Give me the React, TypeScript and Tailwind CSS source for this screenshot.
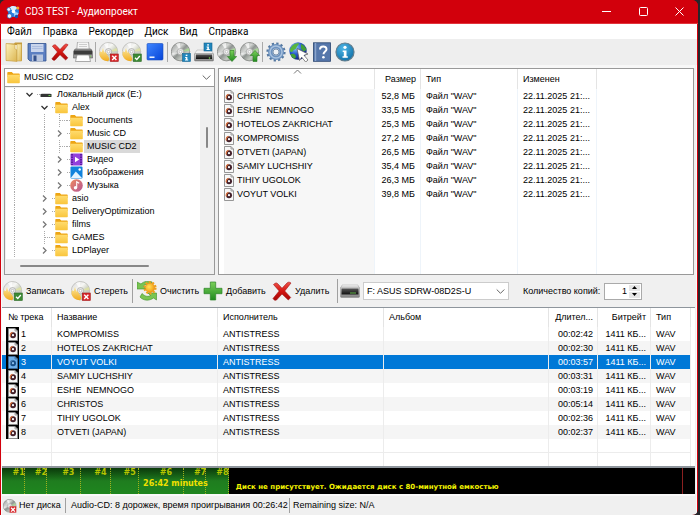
import { useState, type ReactNode } from "react";

/* ---------- data ---------- */

type FileRow = { name: string; size: string };
const files: FileRow[] = [
  { name: "CHRISTOS", size: "52,8 МБ" },
  { name: "ESHE  NEMNOGO", size: "33,5 МБ" },
  { name: "HOTELOS ZAKRICHAT", size: "25,3 МБ" },
  { name: "KOMPROMISS", size: "27,2 МБ" },
  { name: "OTVETI (JAPAN)", size: "26,5 МБ" },
  { name: "SAMIY LUCHSHIY", size: "35,4 МБ" },
  { name: "TIHIY UGOLOK", size: "26,3 МБ" },
  { name: "VOYUT VOLKI", size: "39,8 МБ" },
];

type Track = { name: string; time: string; seconds: number };
const tracks: Track[] = [
  { name: "KOMPROMISS", time: "00:02:42", seconds: 162 },
  { name: "HOTELOS ZAKRICHAT", time: "00:02:30", seconds: 150 },
  { name: "VOYUT VOLKI", time: "00:03:57", seconds: 237 },
  { name: "SAMIY LUCHSHIY", time: "00:03:31", seconds: 211 },
  { name: "ESHE  NEMNOGO", time: "00:03:19", seconds: 199 },
  { name: "CHRISTOS", time: "00:05:14", seconds: 314 },
  { name: "TIHIY UGOLOK", time: "00:02:36", seconds: 156 },
  { name: "OTVETI (JAPAN)", time: "00:02:37", seconds: 157 },
];

const PREGAP_SECONDS = 2;
const DISC_SECONDS = 4800;
const SCALE_SECONDS = 4895;

type NodeKind = "drive" | "folder" | "video" | "images" | "music";
type TreeNode = { label: string; depth: number; kind: NodeKind; state: "open" | "closed" | "leaf"; selected?: boolean };
const tree: TreeNode[] = [
  { label: "Локальный диск (E:)", depth: 0, kind: "drive", state: "open" },
  { label: "Alex", depth: 1, kind: "folder", state: "open" },
  { label: "Documents", depth: 2, kind: "folder", state: "leaf" },
  { label: "Music CD", depth: 2, kind: "folder", state: "closed" },
  { label: "MUSIC CD2", depth: 2, kind: "folder", state: "leaf", selected: true },
  { label: "Видео", depth: 2, kind: "video", state: "closed" },
  { label: "Изображения", depth: 2, kind: "images", state: "closed" },
  { label: "Музыка", depth: 2, kind: "music", state: "closed" },
  { label: "asio", depth: 1, kind: "folder", state: "closed" },
  { label: "DeliveryOptimization", depth: 1, kind: "folder", state: "closed" },
  { label: "films", depth: 1, kind: "folder", state: "closed" },
  { label: "GAMES", depth: 1, kind: "folder", state: "leaf" },
  { label: "LDPlayer", depth: 1, kind: "folder", state: "closed" },
];

/* ---------- icons ---------- */

function Gradients() {
  return (
    <svg className="absolute h-0 w-0" aria-hidden="true">
      <defs>
        <linearGradient id="discSilver" x1="0" y1="0" x2="1" y2="1">
          <stop offset="0" stopColor="#8f9291" />
          <stop offset=".35" stopColor="#d4d6d4" />
          <stop offset=".5" stopColor="#8f9491" />
          <stop offset=".7" stopColor="#c4c9c2" />
          <stop offset="1" stopColor="#777b79" />
        </linearGradient>
        <linearGradient id="discLight" x1="0" y1="0" x2="1" y2="1">
          <stop offset="0" stopColor="#d5d5d5" />
          <stop offset=".4" stopColor="#f7f7f5" />
          <stop offset=".6" stopColor="#cfd3c4" />
          <stop offset="1" stopColor="#b7b9b4" />
        </linearGradient>
        <linearGradient id="flame" x1="0" y1="0" x2="0" y2="1">
          <stop offset="0" stopColor="#fbe9a0" />
          <stop offset="1" stopColor="#f2ab1c" />
        </linearGradient>
        <linearGradient id="folderTall" x1="0" y1="0" x2="1" y2="1">
          <stop offset="0" stopColor="#fdf3bd" />
          <stop offset="1" stopColor="#dcb550" />
        </linearGradient>
        <linearGradient id="folderFront" x1="0" y1="0" x2="0" y2="1">
          <stop offset="0" stopColor="#ffdc6f" />
          <stop offset="1" stopColor="#f9c53c" />
        </linearGradient>
        <linearGradient id="redX" x1="0" y1="0" x2="0" y2="1">
          <stop offset="0" stopColor="#f0544c" />
          <stop offset=".5" stopColor="#d3140f" />
          <stop offset="1" stopColor="#a50808" />
        </linearGradient>
        <linearGradient id="greenUp" x1="0" y1="0" x2="0" y2="1">
          <stop offset="0" stopColor="#7bd05a" />
          <stop offset="1" stopColor="#1f8a1f" />
        </linearGradient>
        <linearGradient id="blueTile" x1="0" y1="0" x2="1" y2="1">
          <stop offset="0" stopColor="#3f86ff" />
          <stop offset="1" stopColor="#0644d8" />
        </linearGradient>
        <linearGradient id="greyBox" x1="0" y1="0" x2="0" y2="1">
          <stop offset="0" stopColor="#dcdcdc" />
          <stop offset="1" stopColor="#7e7e7e" />
        </linearGradient>
        <linearGradient id="darkBox" x1="0" y1="0" x2="0" y2="1">
          <stop offset="0" stopColor="#555" />
          <stop offset="1" stopColor="#111" />
        </linearGradient>
        <radialGradient id="infoBlue" cx=".4" cy=".3" r=".8">
          <stop offset="0" stopColor="#4fb6e6" />
          <stop offset="1" stopColor="#0a6aa3" />
        </radialGradient>
        <radialGradient id="globe" cx=".35" cy=".3" r=".8">
          <stop offset="0" stopColor="#8fd0ff" />
          <stop offset=".5" stopColor="#2456c8" />
          <stop offset="1" stopColor="#101a6a" />
        </radialGradient>
        <radialGradient id="sun" cx=".4" cy=".4" r=".6">
          <stop offset="0" stopColor="#ffe25a" />
          <stop offset="1" stopColor="#f29a12" />
        </radialGradient>
        <linearGradient id="music" x1="0" y1="0" x2="1" y2="1">
          <stop offset="0" stopColor="#ee8a5c" />
          <stop offset="1" stopColor="#b65696" />
        </linearGradient>
      </defs>
    </svg>
  );
}

function Svg({ children, className = "h-5 w-5", box = "0 0 20 20" }: { children: ReactNode; className?: string; box?: string }) {
  return (
    <svg viewBox={box} className={`${className} block shrink-0`} aria-hidden="true">
      {children}
    </svg>
  );
}

function DiscShape({ light = false }: { light?: boolean }) {
  return (
    <>
      <circle cx="9.5" cy="9.7" r="9.2" fill={light ? "url(#discLight)" : "url(#discSilver)"} stroke={light ? "#b5b5b0" : "#757875"} strokeWidth=".7" />
      <path d="M9.5 9.7 L5 2 A9 9 0 0 1 9 .9Z" fill="#fff" opacity=".7" />
      <path d="M9.5 9.7 L17.6 6 A9 9 0 0 1 18.5 9Z" fill={light ? "#e2e59a" : "#a5e08e"} opacity=".7" />
      <path d="M9.5 9.7 L1.6 14 A9 9 0 0 1 .7 11Z" fill="#fff" opacity=".5" />
      <circle cx="9.5" cy="9.7" r="3.2" fill="#e8e8e8" stroke="#999" strokeWidth=".6" />
      <circle cx="9.5" cy="9.7" r="1.3" fill="#fff" stroke="#888" strokeWidth=".4" />
    </>
  );
}

function BurnIcon({ badge }: { badge: "check" | "cross" }) {
  return (
    <Svg>
      <DiscShape light />
      <path d="M1 9c1 1 1.500 1.500 2 .5.4-1 .2-2.500 1.200-3.500 0 2.500 1.300 3 1.500 5 .3-.5.400-.9.3-1.500C7.500 11 8 13 9 14l1.500 3-1.500 2.300C4 19 .8 16 .4 12z" fill="url(#flame)" />
      {badge === "check" ? (
        <>
          <rect x="11.300" y="12" width="8" height="7.500" fill="#3c8a34" stroke="#2b6a26" strokeWidth=".6" />
          <path d="M13 15.700l1.800 1.800 3-3.500" fill="none" stroke="#fff" strokeWidth="1.300" />
        </>
      ) : (
        <>
          <rect x="11.300" y="12" width="8" height="7.500" fill="#d8282c" stroke="#a5181a" strokeWidth=".6" />
          <path d="M13.200 13.700l4.200 4.200m0-4.200l-4.200 4.200" stroke="#fff" strokeWidth="1.400" />
        </>
      )}
    </Svg>
  );
}

function InfoBadge({ x, y }: { x: number; y: number }) {
  return (
    <g>
      <rect x={x} y={y} width="8" height="8" fill="#2187bd" stroke="#14638f" strokeWidth=".6" />
      <rect x={x + 3.2} y={y + 1.2} width="1.700" height="1.400" fill="#fff" />
      <path d={`M${x + 2.6} ${y + 3.400}h2.300v2.700h.8v1h-3.200v-1h.8v-1.700h-.7z`} fill="#fff" />
    </g>
  );
}

const DiscInfoIcon = () => (
  <Svg>
    <DiscShape />
    <InfoBadge x={11.500} y={11.500} />
  </Svg>
);

const DriveInfoIcon = () => (
  <Svg>
    <path d="M3 8h14l3 4.500H0z" fill="#f2f2f2" stroke="#aaa" strokeWidth=".5" />
    <rect x=".4" y="11.500" width="19.200" height="7.500" rx="1" fill="url(#greyBox)" stroke="#777" strokeWidth=".5" />
    <rect x="2" y="12.500" width="16" height="4.500" fill="url(#darkBox)" />
    <circle cx="15.500" cy="16" r=".8" fill="#7fdc4f" />
    <InfoBadge x={10} y={1} />
  </Svg>
);

const DriveIcon = () => (
  <Svg>
    <path d="M2 4h16l1.500 4H.5z" fill="#f4f4f4" stroke="#aaa" strokeWidth=".5" />
    <rect x=".4" y="6" width="19.200" height="10.500" rx="1.200" fill="url(#greyBox)" stroke="#8a8a8a" strokeWidth=".5" />
    <rect x="1.500" y="7.500" width="17" height="6" fill="url(#darkBox)" />
    <path d="M10 12h6" stroke="#63b54a" strokeWidth="1" />
  </Svg>
);

function DiscArrowIcon({ up = false }: { up?: boolean }) {
  return (
    <Svg>
      <DiscShape />
      <path
        d={up ? "M15 8.500l4.700 5h-2.700v6h-4v-6h-2.700z" : "M13 8.500h4v6h2.700l-4.700 5-4.700-5h2.700z"}
        fill="url(#greenUp)"
        stroke="#2c7c22"
        strokeWidth=".6"
      />
    </Svg>
  );
}

const OpenIcon = () => (
  <Svg>
    <path d="M2 1.500h8l1-1h7v18H2z" fill="#c69c3c" />
    <path d="M3.500 3h12v15h-12z" fill="#fffbe6" />
    <path d="M2 1.500l9 1V7l2 1v11.500L2 18.500z" fill="url(#folderTall)" stroke="#c8a044" strokeWidth=".6" />
    <path d="M13 2h4.500v17H13z" fill="url(#folderTall)" stroke="#c8a044" strokeWidth=".6" />
  </Svg>
);

const SaveIcon = () => (
  <Svg>
    <path d="M1 1.500h18v17.500H3l-2-2z" fill="#5b7fc2" stroke="#36558f" strokeWidth=".8" />
    <rect x="4" y="2" width="12.500" height="8" fill="#c9d5ec" />
    <path d="M5 4.500h10.500M5 6.500h10.500" stroke="#9fb3da" strokeWidth=".7" />
    <rect x="5" y="12.500" width="11" height="6.500" fill="#b8c5de" />
    <rect x="6.500" y="13.500" width="3" height="5.500" fill="#34518c" />
  </Svg>
);

const CrossIcon = ({ className = "h-5 w-5" }: { className?: string }) => (
  <Svg className={className}>
    <path
      d="M1.500 3.500C3 2 4.500 1.500 5.500 2.500L10 7.300 15 2c1.500-1.300 2.500-1 4 0L12.700 10l6 6.500-2.400 2.500L10 13l-5.500 6c-1.300.7-2.700 0-3.500-1.500L7.200 10z"
      fill="url(#redX)"
      stroke="#a31111"
      strokeWidth=".6"
    />
  </Svg>
);

const PrintIcon = () => (
  <Svg>
    <path d="M4.500 0h11l.8 8H3.700z" fill="#f6f6f6" stroke="#8c8c8c" strokeWidth=".6" />
    <path d="M6 2.500h8M6 4.500h8" stroke="#bbb" strokeWidth=".7" />
    <path d="M2 7h16l1.700 3v6H.3v-6z" fill="#9a9a9a" stroke="#5f5f5f" strokeWidth=".6" />
    <rect x="1" y="8.500" width="18" height="4" fill="#3c3c3c" />
    <path d="M4 13h12l1.500 6.500h-15z" fill="#fdfdfd" stroke="#777" strokeWidth=".6" />
    <circle cx="17.500" cy="14.300" r=".7" fill="#7bd255" />
  </Svg>
);

const BlueDiscIcon = () => (
  <Svg>
    <rect x="2" y="1.500" width="16" height="16.500" rx="1" fill="url(#blueTile)" stroke="#1b4db8" strokeWidth=".6" />
    <rect x="4.500" y="14.500" width="5" height="1.400" fill="#fff" />
  </Svg>
);

const GearIcon = () => (
  <Svg>
    <circle cx="10" cy="10" r="8.300" fill="none" stroke="#54779f" strokeWidth="2.600" strokeDasharray="2.200 2.145" />
    <circle cx="10" cy="10" r="5.700" fill="none" stroke="#6d92bf" strokeWidth="4.600" />
    <circle cx="10" cy="10" r="6" fill="none" stroke="#a9c2df" strokeWidth="1.500" />
    <circle cx="10" cy="10" r="3" fill="#eef1f5" stroke="#4c6d94" strokeWidth=".7" />
  </Svg>
);

const GlobeIcon = () => (
  <Svg>
    <circle cx="9" cy="9" r="8.700" fill="url(#globe)" />
    <path d="M3 4c2-2 5-3.500 7-2.500-.5 2-2 2-2.500 4S4.500 7.500 3.500 9.500C2 11 .6 9 .8 7.500z" fill="#57b63f" />
    <path d="M12 2c3 1 5 3.500 5.500 6l-3 1.500-2.500-3zM3 12c2-.6 4 1 4 3l-1.500 2C3.500 16 2 14 1.500 12z" fill="#43a036" />
    <path d="M8 6.500l11 5.500-4 1.300 4 4.700-2.300 2-4-4.800-2.200 3.300z" fill="#fff" stroke="#555" strokeWidth=".7" />
  </Svg>
);

const HelpIcon = () => (
  <Svg>
    <rect x="1.500" y=".8" width="17" height="18.500" fill="#5677ab" stroke="#29446f" strokeWidth=".8" />
    <path d="M3.500 1v18" stroke="#8ba4cb" strokeWidth="1.400" />
    <path d="M8 7.500c0-4 6.500-4 6.500-.3 0 2.300-3 2.300-3 5" fill="none" stroke="#fff" strokeWidth="2" />
    <circle cx="11.400" cy="15.300" r="1.300" fill="#fff" />
  </Svg>
);

const InfoIcon = () => (
  <Svg>
    <circle cx="10" cy="10" r="9" fill="url(#infoBlue)" stroke="#5f7c8d" strokeWidth="1.200" />
    <circle cx="10" cy="5.300" r="1.600" fill="#fff" />
    <path d="M7.700 8.500h3.800v5.700h1.300v1.600H7.500v-1.600h1.300v-4.100H7.700z" fill="#fff" />
  </Svg>
);

const PlusIcon = () => (
  <Svg>
    <path d="M7.300 1h5.400v6.300H19v5.400h-6.300V19H7.300v-6.300H1V7.300h6.300z" fill="url(#greenUp)" stroke="#2c8428" strokeWidth=".7" />
  </Svg>
);

const RefreshIcon = () => (
  <Svg>
    <path d="M0 1l4 2C7 0 12-.5 15 1L13 4C10 3 8 3.500 6.500 5L9 8H0z" fill="#79c552" stroke="#3c8d2b" strokeWidth=".6" />
    <path d="M19.500 19l-3-2c-4 3-10 3-13.500-1l2-3.500c3 3 6 3.500 8.500 2L11 12h8.500z" fill="#79c552" stroke="#3c8d2b" strokeWidth=".6" />
    <circle cx="13" cy="6.800" r="5.600" fill="none" stroke="#f0a21a" strokeWidth="2" strokeDasharray="2 1.500" />
    <circle cx="13" cy="6.800" r="4.700" fill="url(#sun)" stroke="#e38b12" strokeWidth=".6" />
  </Svg>
);

const FolderIcon = () => (
  <Svg className="h-[13px] w-[13px]" box="0 0 13 13">
    <path d="M.3 2c0-.6.400-1 1-1h3.500l1.400 1.500h5.500c.6 0 1 .4 1 1V6H.3z" fill="#eda514" />
    <rect x=".2" y="3.700" width="12.600" height="8.500" rx=".8" fill="url(#folderFront)" />
  </Svg>
);

const nodeIcons: Record<NodeKind, () => ReactNode> = {
  folder: FolderIcon,
  drive: () => (
    <Svg className="h-[13px] w-[13px]" box="0 0 13 13">
      <path d="M2 5h8l1.500 1.500H.5z" fill="#d4d4d4" />
      <rect x=".5" y="6" width="11" height="3" rx=".5" fill="#333" />
      <rect x="8.500" y="7" width="2" height="1" fill="#63d44a" />
    </Svg>
  ),
  video: () => (
    <Svg className="h-[13px] w-[13px]" box="0 0 13 13">
      <rect x=".5" y=".5" width="12" height="12" rx="1" fill="#9340dc" />
      <path d="M2 1v11M11 1v11" stroke="#3f0f7a" strokeWidth="1.300" strokeDasharray="1.500 1" />
      <path d="M5 3.700v5.600l4.300-2.800z" fill="#fff" />
    </Svg>
  ),
  images: () => (
    <Svg className="h-[13px] w-[13px]" box="0 0 13 13">
      <rect x=".5" y=".5" width="12" height="12" rx="1" fill="#1283dc" />
      <path d="M.8 12l5-6.500L12 12z" fill="#e4f4ff" />
      <circle cx="9.700" cy="3.500" r="1.200" fill="#fff" />
    </Svg>
  ),
  music: () => (
    <Svg className="h-[13px] w-[13px]" box="0 0 13 13">
      <circle cx="6.500" cy="6.500" r="6.300" fill="url(#music)" />
      <circle cx="5.500" cy="8.700" r="1.700" fill="#fff" />
      <path d="M6.700 8.700V2.700l2.500 1.500" fill="none" stroke="#fff" strokeWidth="1.100" />
    </Svg>
  ),
};

function Chevron({ open = false }: { open?: boolean }) {
  return (
    <Svg className="h-[9px] w-[9px]" box="0 0 9 9">
      <path d={open ? "M1.500 3l3 3 3-3" : "M3 1.500l3 3-3 3"} fill="none" stroke={open ? "#333" : "#777"} strokeWidth="1.300" />
    </Svg>
  );
}

const SelectArrow = () => (
  <span className="pointer-events-none absolute right-[3px]">
    <Svg className="h-[9px] w-[9px]" box="0 0 9 9">
      <path d="M.7 2.500l3.800 3.800 3.800-3.800" fill="none" stroke="#666" strokeWidth="1" />
    </Svg>
  </span>
);

const WavIcon = ({ tinted = false }: { tinted?: boolean }) => (
  <Svg className="h-[13px] w-[10px]" box="0 0 10 13">
    <path d="M.5.5h6.500l2.500 2.500v9.500h-9z" fill={tinted ? "#6fb0ea" : "#f8f8f8"} stroke={tinted ? "#3b6c9c" : "#8b8b8b"} strokeWidth=".9" />
    <path d="M7 .5V3h2.500" fill="none" stroke={tinted ? "#3b6c9c" : "#8b8b8b"} strokeWidth=".8" />
    <circle cx="5" cy="7.200" r="3" fill={tinted ? "#174e86" : "#43202a"} />
    <path d="M2.500 8.500A3 3 0 0 1 4.500 4.300" fill="none" stroke={tinted ? "#4f7fae" : "#e0743c"} strokeWidth="1.200" />
    <circle cx="5" cy="7.200" r="1.100" fill={tinted ? "#8fc1ee" : "#fff"} />
  </Svg>
);

const AppIcon = () => (
  <Svg className="h-[14px] w-[14px]" box="0 0 14 14">
    <circle cx="7.500" cy="6.500" r="5.500" fill="#2b7fe0" />
    <path d="M3 3c2-3 7-2.500 8.500 0L7.500 6.500z" fill="#d7ecff" />
    <path d="M7.500 6.500l5 1.500c-.5 2-2 3.500-4 4z" fill="#9fd2ff" />
    <circle cx="7.500" cy="6.500" r="1.800" fill="#fff" />
    <circle cx="2.800" cy="4.500" r="1.900" fill="#e8f4ff" stroke="#145db5" strokeWidth=".7" />
    <circle cx="3.500" cy="11" r="2.300" fill="#e8f4ff" stroke="#145db5" strokeWidth=".7" />
    <circle cx="11.800" cy="3" r="1.500" fill="#f9a12a" />
    <circle cx="10.500" cy="11.500" r="1.700" fill="#1b50b0" />
  </Svg>
);

const NoDiscIcon = () => (
  <Svg className="h-[14px] w-[14px]">
    <DiscShape />
    <rect x="9.500" y="10.500" width="9.500" height="9" fill="#d8282c" />
    <path d="M11.500 12.500l5.500 5.500m0-5.500L11.500 18" stroke="#fff" strokeWidth="1.800" />
  </Svg>
);

/* ---------- window parts ---------- */

function TitleBar() {
  return (
    <header className="flex h-6 shrink-0 items-center border-b border-[#e2343c] bg-[#d2000c] pl-[6px] text-white">
      <AppIcon />
      <h1 className="ml-[5px] flex-1 font-['Roboto','Noto_Sans',sans-serif] text-[10px] leading-4 font-normal">CD3 TEST - Аудиопроект</h1>
      <button aria-label="Свернуть" className="flex w-[38px] justify-center">
        <Svg className="h-[9px] w-[9px]" box="0 0 9 9"><path d="M0 4.500h9" stroke="#fff" strokeWidth="1" /></Svg>
      </button>
      <button aria-label="Развернуть" className="flex w-[36px] justify-center">
        <Svg className="h-[9px] w-[9px]" box="0 0 9 9"><rect x=".5" y=".5" width="8" height="8" rx="1" fill="none" stroke="#fff" /></Svg>
      </button>
      <button aria-label="Закрыть" className="flex w-[37px] justify-center">
        <Svg className="h-[9px] w-[9px]" box="0 0 9 9"><path d="M.5.5l8 8m0-8l-8 8" stroke="#fff" /></Svg>
      </button>
    </header>
  );
}

function MenuBar() {
  return (
    <nav className="flex h-[15px] shrink-0 items-center gap-[11px] bg-white pl-[6px] font-['Roboto','Noto_Sans',sans-serif] text-[10px] leading-[15px]">
      {["Файл", "Правка", "Рекордер", "Диск", "Вид", "Справка"].map((item) => (
        <button key={item}>{item}</button>
      ))}
    </nav>
  );
}

const Separator = () => <span className="mx-px w-px self-stretch bg-[#a9a9a9]" />;

function ToolGroup({ items }: { items: [string, ReactNode][] }) {
  return (
    <div className="flex">
      {items.map(([label, icon]) => (
        <button key={label} aria-label={label} className="flex w-[23px] items-center justify-center">
          {icon}
        </button>
      ))}
    </div>
  );
}

function MainToolbar() {
  return (
    <div className="flex h-[26px] shrink-0 items-center bg-[#eee] py-[3px] pl-px" role="toolbar">
      <ToolGroup items={[["Открыть", <OpenIcon />], ["Сохранить", <SaveIcon />], ["Удалить файл", <CrossIcon className="h-[18px] w-[18px]" />], ["Печать", <PrintIcon />]]} />
      <Separator />
      <ToolGroup items={[["Стереть диск", <BurnIcon badge="cross" />], ["Записать диск", <BurnIcon badge="check" />], ["Образ", <BlueDiscIcon />]]} />
      <Separator />
      <ToolGroup items={[["О диске", <DiscInfoIcon />], ["О приводе", <DriveInfoIcon />], ["Загрузить", <DiscArrowIcon />], ["Извлечь", <DiscArrowIcon up />]]} />
      <Separator />
      <ToolGroup items={[["Настройки", <GearIcon />], ["Сайт", <GlobeIcon />], ["Помощь", <HelpIcon />], ["О программе", <InfoIcon />]]} />
    </div>
  );
}

const Guide = ({ visible }: { visible: boolean }) => (
  <span className="flex w-[15px] justify-center self-stretch">{visible && <span className="border-l border-dotted border-[#aaa]" />}</span>
);

function TreeRow({ node }: { node: TreeNode }) {
  const Icon = nodeIcons[node.kind];
  return (
    <li className="flex h-[13px] items-center">
      <Guide visible />
      {node.depth > 0 && <Guide visible={false} />}
      {node.depth > 1 && <Guide visible />}
      <button className="flex h-[13px] items-center">
        {node.state === "leaf" ? (
          <span className="flex h-[13px] w-[15px] items-center pl-[7px]">
            <span className="h-full border-l border-dotted border-[#aaa]" />
            <span className="flex-1 border-t border-dotted border-[#aaa]" />
          </span>
        ) : (
          <span className="flex w-[15px] justify-center">
            <Chevron open={node.state === "open"} />
          </span>
        )}
        <span className="w-[3px] border-t border-dotted border-[#aaa]" />
        <Icon />
        <span className={`ml-px h-[13px] px-[3px] leading-[13px] whitespace-nowrap ${node.selected ? "bg-[#d9d9d9]" : ""}`}>{node.label}</span>
      </button>
    </li>
  );
}

function FolderPane() {
  return (
    <section className="flex w-[211px] shrink-0 flex-col">
      <label className="relative flex h-[19px] shrink-0 items-center border border-[#999] bg-white pl-[2px]">
        <FolderIcon />
        <select aria-label="Папка" className="h-full flex-1 appearance-none bg-transparent pl-[4px]">
          <option>MUSIC CD2</option>
        </select>
        <SelectArrow />
      </label>
      <div className="flex min-h-0 flex-1 flex-col border border-t-0 border-[#999] bg-[#f0f0f0] p-px">
        <div className="flex min-h-0 flex-1">
          <ul className="flex-1 overflow-hidden bg-white pl-px">
            {tree.map((node) => (
              <TreeRow key={node.label} node={node} />
            ))}
          </ul>
          <div className="flex w-[13px] shrink-0 justify-center pt-[39px]">
            <span className="h-[21px] w-[2px] rounded bg-[#888]" />
          </div>
        </div>
        <div className="flex h-[14px] shrink-0 items-center pl-[14px]">
          <span className="h-[2px] w-[129px] rounded bg-[#888]" />
        </div>
      </div>
    </section>
  );
}

function FilesPane() {
  const line = "border-r border-[#e4e4e4]";
  const soft = "border-r border-[#eef4fa]";
  return (
    <section className="min-w-0 flex-1 border border-[#999] bg-white pl-[5px]">
      <table className="h-full w-full table-fixed border-separate border-spacing-0 whitespace-nowrap">
        <colgroup>
          <col className="w-[151px]" />
          <col className="w-[46px]" />
          <col className="w-[97px]" />
          <col className="w-[79px]" />
          <col />
        </colgroup>
        <thead>
          <tr className="h-5 text-left">
            <th className={`relative font-normal ${line}`}>
              Имя
              <Svg className="absolute top-0 left-[69px] h-[5px] w-[9px]" box="0 0 9 5"><path d="M1 4.500l3.500-3.500L8 4.500" fill="none" stroke="#777" /></Svg>
            </th>
            <th className={`pr-1 text-right font-normal ${line}`}>Размер</th>
            <th className={`pl-[5px] font-normal ${line}`}>Тип</th>
            <th className={`pl-[5px] font-normal ${line}`}>Изменен</th>
            <th />
          </tr>
        </thead>
        <tbody>
          {files.map((file) => (
            <tr key={file.name} className="h-[14px]">
              <td className={`bg-[#f7f7f7] ${soft}`}>
                <span className="flex h-[14px] items-center gap-[3px] whitespace-pre"><WavIcon />{file.name}</span>
              </td>
              <td className={`pr-[5px] text-right ${soft}`}>{file.size}</td>
              <td className={`pl-[5px] ${soft}`}>Файл "WAV"</td>
              <td className={`pl-[5px] ${soft}`}>22.11.2025 21:...</td>
              <td />
            </tr>
          ))}
          <tr>
            <td className={`bg-[#f7f7f7] ${soft}`} />
            <td className={soft} />
            <td className={soft} />
            <td className={soft} />
            <td />
          </tr>
        </tbody>
      </table>
    </section>
  );
}

function Action({ icon, label, className }: { icon: ReactNode; label: string; className: string }) {
  return (
    <button className={`flex shrink-0 items-center gap-[3px] ${className}`}>
      {icon}
      {label}
    </button>
  );
}

function ProjectToolbar() {
  const [copies, setCopies] = useState(1);
  return (
    <div className="flex h-8 shrink-0 items-center pl-px whitespace-nowrap" role="toolbar">
      <Action className="w-[68px]" icon={<BurnIcon badge="check" />} label="Записать" />
      <Action className="w-[61px]" icon={<BurnIcon badge="cross" />} label="Стереть" />
      <span className="mr-1 h-6 w-px bg-[#a0a0a0]" />
      <Action className="w-[66px]" icon={<RefreshIcon />} label="Очистить" />
      <Action className="w-[69px]" icon={<PlusIcon />} label="Добавить" />
      <Action className="w-[65px]" icon={<CrossIcon />} label="Удалить" />
      <span className="mr-[2px] h-6 w-px bg-[#a0a0a0]" />
      <label htmlFor="drive" aria-label="Привод"><DriveIcon /></label>
      <span className="relative ml-[3px] flex h-[18px] w-[146px] items-center border border-[#ccc] bg-white">
        <select id="drive" className="h-full w-full appearance-none bg-transparent pl-[3px]">
          <option>F: ASUS SDRW-08D2S-U</option>
        </select>
        <SelectArrow />
      </span>
      <label htmlFor="copies" className="ml-[14px] w-[81px]">Количество копий:</label>
      <span className="flex h-[17px] w-[38px] border border-[#aaa] bg-white p-px">
        <input
          id="copies"
          inputMode="numeric"
          value={copies}
          onChange={(e) => setCopies(Number(e.target.value) || 1)}
          className="min-w-0 flex-1 pr-[2px] text-right outline-none"
        />
        <span className="flex w-[11px] flex-col gap-px">
          <button aria-label="Больше" onClick={() => setCopies(copies + 1)} className="flex flex-1 items-center justify-center bg-[#e6e6e6]">
            <Svg className="h-[3px] w-[5px]" box="0 0 5 3"><path d="M0 3l2.500-3L5 3z" /></Svg>
          </button>
          <button aria-label="Меньше" onClick={() => setCopies(Math.max(1, copies - 1))} className="flex flex-1 items-center justify-center bg-[#e6e6e6]">
            <Svg className="h-[3px] w-[5px]" box="0 0 5 3"><path d="M0 0l2.500 3L5 0z" /></Svg>
          </button>
        </span>
      </span>
    </div>
  );
}

function TrackList() {
  const [selected, setSelected] = useState(2);
  const head = "border-r border-[#e4e4e4] font-normal";
  const cell = "border-r border-[#ececec]";
  const blank = "border-r border-b border-[#ececec]";
  return (
    <section className="min-h-0 flex-1 overflow-hidden border-t border-[#8e959c] bg-white">
      <table className="w-full table-fixed border-separate border-spacing-0 whitespace-nowrap">
        <colgroup>
          <col className="w-[50px]" />
          <col className="w-[166px]" />
          <col className="w-[166px]" />
          <col />
          <col className="w-[49px]" />
          <col className="w-[53px]" />
          <col className="w-[40px]" />
          <col className="w-[4px]" />
        </colgroup>
        <thead>
          <tr className="h-[19px] text-left">
            <th className={`pl-[6px] ${head}`}>№ трека</th>
            <th className={`pl-[5px] ${head}`}>Название</th>
            <th className={`pl-[5px] ${head}`}>Исполнитель</th>
            <th className={`pl-[5px] ${head}`}>Альбом</th>
            <th className={`pr-1 text-right ${head}`}>Длител...</th>
            <th className={`pr-1 text-right ${head}`}>Битрейт</th>
            <th className={`pl-[5px] ${head}`}>Тип</th>
            <th />
          </tr>
        </thead>
        <tbody>
          {tracks.map((track, i) => {
            const active = i === selected;
            return (
              <tr
                key={track.name}
                onClick={() => setSelected(i)}
                className={`h-[14px] ${active ? "bg-[#0078d7] text-white" : i % 2 ? "bg-[#f5f5f5]" : "bg-white"}`}
              >
                <td className={`pl-1 ${cell}`}>
                  <span className="flex h-[14px] items-center gap-[2px]">
                    <span className="flex h-[14px] w-[13px] items-center justify-center bg-black"><WavIcon tinted={active} /></span>
                    {i + 1}
                  </span>
                </td>
                <td className={`pl-[5px] whitespace-pre ${cell}`}>{track.name}</td>
                <td className={`pl-[5px] ${cell}`}>ANTISTRESS</td>
                <td className={cell} />
                <td className={`pr-1 text-right ${cell}`}>{track.time}</td>
                <td className={`pr-1 text-right ${cell}`}>1411 КБ...</td>
                <td className={`pl-[5px] ${cell}`}>WAV</td>
                <td className="bg-white" />
              </tr>
            );
          })}
          {[0, 1].map((i) => (
            <tr key={i} className="h-[14px]">
              {[0, 1, 2, 3, 4, 5, 6].map((c) => (
                <td key={c} className={blank} />
              ))}
              <td />
            </tr>
          ))}
        </tbody>
      </table>
    </section>
  );
}

function CapacityBar() {
  const used = tracks.reduce((sum, t) => sum + t.seconds + PREGAP_SECONDS, 0);
  return (
    <section className="flex h-7 shrink-0 border-t-2 border-[#8e959c] bg-black font-['DejaVu_Sans',sans-serif] font-bold">
      <div className="relative flex shrink-0 bg-linear-to-b from-[#0b3a0b] via-[#1f7d1f] to-[#1f861f]" style={{ width: `${(used / SCALE_SECONDS) * 100}%` }}>
        {tracks.map((t, i) => (
          <span
            key={t.name}
            className="border-r border-dotted border-[#a3b31c] text-[8px] leading-[10px] text-[#b5c400]"
            style={{ width: `${((t.seconds + PREGAP_SECONDS) / used) * 100}%` }}
          >
            <span className="block pl-[47%]">#{i + 1}</span>
          </span>
        ))}
        <span className="absolute right-[21px] bottom-[5px] text-[8px] leading-[10px] whitespace-nowrap text-[#f0e000]">26:42 minutes</span>
      </div>
      <p className="flex-1 self-end pb-[2px] pl-[7px] text-[7px] leading-[10px] whitespace-nowrap text-[#f4f400]">
        Диск не присутствует. Ожидается диск с 80-минутной емкостью
      </p>
      <span className="shrink-0 border-l border-[#8b2020]" style={{ width: `${((SCALE_SECONDS - DISC_SECONDS) / SCALE_SECONDS) * 100}%` }} />
    </section>
  );
}

function StatusBar() {
  return (
    <footer className="flex h-[21px] shrink-0 items-center border-t-2 border-[#fafafa] pl-px whitespace-nowrap">
      <NoDiscIcon />
      <span className="ml-[2px] w-[46px]">Нет диска</span>
      <span className="h-[15px] w-px bg-[#a0a0a0]" />
      <span className="w-[223px] pl-[5px]">Audio-CD: 8 дорожек, время проигрывания 00:26:42</span>
      <span className="h-[15px] w-px bg-[#a0a0a0]" />
      <span className="pl-[3px]">Remaining size: N/A</span>
    </footer>
  );
}

export default function App() {
  return (
    <div className="h-screen bg-[#26262b] pr-[2px] font-['Liberation_Sans',Arial,sans-serif] text-[9px] leading-[13px] text-black">
      <Gradients />
      <div className="flex h-full flex-col overflow-hidden rounded-t-md rounded-br-md bg-[#d2000c]">
        <TitleBar />
        <main className="mx-px flex min-h-0 flex-1 flex-col bg-[#f0f0f0]">
          <MenuBar />
          <MainToolbar />
          <div className="flex min-h-0 flex-1 flex-col border-x border-[#fafafa] pr-px">
            <div className="flex h-[210px] shrink-0 gap-[3px] border-t-[3px] border-[#f7f7f7] pr-px pl-[2px]">
              <FolderPane />
              <FilesPane />
            </div>
            <ProjectToolbar />
            <TrackList />
            <CapacityBar />
            <StatusBar />
          </div>
        </main>
      </div>
    </div>
  );
}
